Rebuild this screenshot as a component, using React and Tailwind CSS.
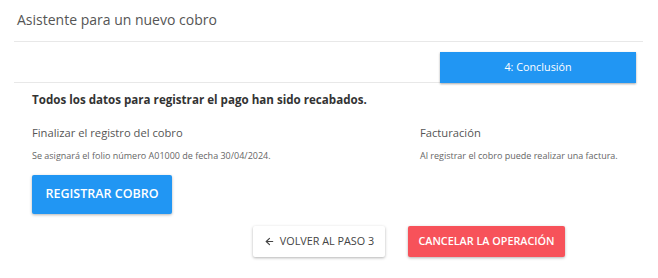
import { ArrowLeft } from 'lucide-react';

function App() {
  return (
    <div className="w-[658px] h-[278px] bg-white font-['Open_Sans',sans-serif] text-[#333]">
      <div className="pl-[14px] pr-[15px]">
        <div className="h-[42px] border-b border-[#e8e8e8] pl-[3px] pt-[10px]">
          <h1 className="text-[14px] leading-[20px] text-[#555]">Asistente para un nuevo cobro</h1>
        </div>
        <div className="flex items-stretch pt-[10px] pr-[7px]">
          <div className="flex-1 border-b border-[#e8e8e8]" />
          <div className="w-[196px] h-[31px] bg-[#2196f3] text-white text-[10.8px] flex items-center justify-center shadow-[0_1px_2px_rgba(0,0,0,0.35)]">
            4: Conclusión
          </div>
        </div>
      </div>

      <div className="px-[32px] pt-[9px]">
        <p className="text-[11.6px] font-bold leading-[16px] text-[#333]">
          Todos los datos para registrar el pago han sido recabados.
        </p>
        <div className="flex mt-[17px]">
          <div className="w-[388px]">
            <h2 className="text-[11.2px] leading-[16px] text-[#555]">Finalizar el registro del cobro</h2>
            <p className="text-[9px] leading-[13px] text-[#666] mt-[8px]">
              Se asignará el folio número A01000 de fecha 30/04/2024.
            </p>
          </div>
          <div>
            <h2 className="text-[11.2px] leading-[16px] text-[#555]">Facturación</h2>
            <p className="text-[9px] leading-[13px] text-[#666] mt-[8px]">
              Al registrar el cobro puede realizar una factura.
            </p>
          </div>
        </div>
        <button className="mt-[13px] w-[140px] h-[39px] bg-[#2196f3] text-white text-[12.5px] font-semibold rounded-[2px] shadow-[0_1px_3px_rgba(0,0,0,0.3)]">
          REGISTRAR COBRO
        </button>
      </div>

      <div className="flex gap-[23px] pl-[253px] mt-[12px]">
        <button className="w-[132px] h-[31px] bg-white text-[#444] text-[10.8px] rounded-[2px] flex items-center justify-center gap-[5px] shadow-[0_1px_3px_rgba(0,0,0,0.3)]">
          <ArrowLeft className="w-[11px] h-[11px]" strokeWidth={2.5} />
          VOLVER AL PASO 3
        </button>
        <button className="w-[157px] h-[31px] bg-[#f7525a] text-white text-[10.8px] font-semibold rounded-[2px] shadow-[0_1px_3px_rgba(0,0,0,0.3)]">
          CANCELAR LA OPERACIÓN
        </button>
      </div>
    </div>
  );
}

export default App;
